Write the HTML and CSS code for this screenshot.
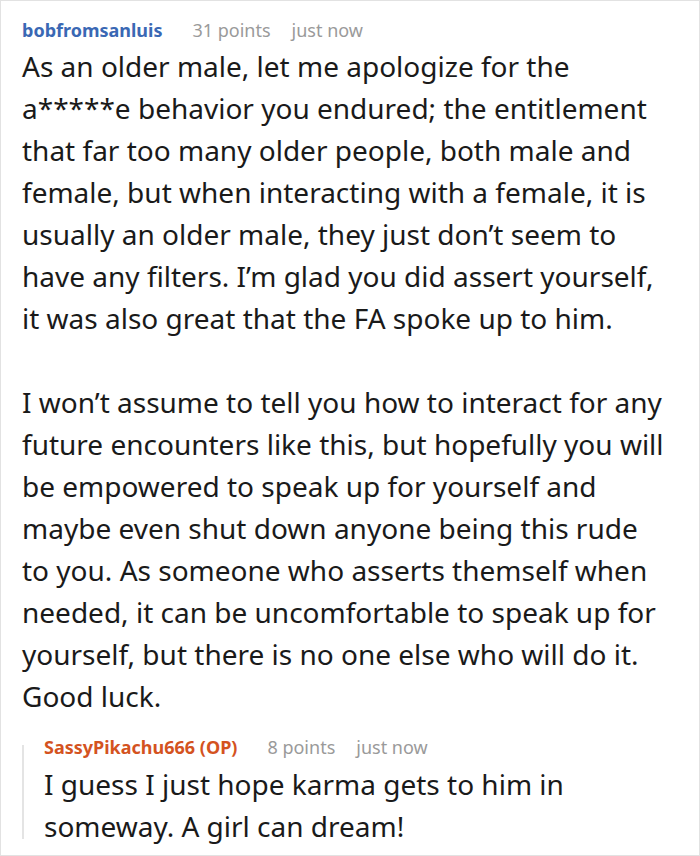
FILE: index.html
```html
<!DOCTYPE html>
<html lang="en">
<head>
<meta charset="utf-8">
<link rel="stylesheet" href="styles.css">
</head>
<body>
<div class="card">
  <div class="meta">
    <span class="user">bobfromsanluis</span>
    <span class="points">31 points</span>
    <span class="time">just now</span>
  </div>
  <div class="text">
    <p>As an older male, let me apologize for the a*****e behavior you endured; the entitlement that far too many older people, both male and female, but when interacting with a female, it is usually an older male, they just don’t seem to have any filters. I’m glad you did assert yourself, it was also great that the FA spoke up to him.</p>
    <p>I won’t assume to tell you how to interact for any future encounters like this, but hopefully you will be empowered to speak up for yourself and maybe even shut down anyone being this rude to you. As someone who asserts themself when needed, it can be uncomfortable to speak up for yourself, but there is no one else who will do it. Good luck.</p>
  </div>
  <div class="reply">
    <div class="meta reply-meta">
      <span class="user op">SassyPikachu666 (OP)</span>
      <span class="points">8 points</span>
      <span class="time">just now</span>
    </div>
    <div class="text">
      <p>I guess I just hope karma gets to him in someway. A girl can dream!</p>
    </div>
  </div>
</div>
</body>
</html>
```
FILE: styles.css
```css
html, body {
  margin: 0;
  padding: 0;
  background: #fff;
}
.card {
  width: 700px;
  height: 856px;
  box-sizing: border-box;
  border: 1px solid #e2e2e2;
  padding: 15px 29px 0 21px;
  font-family: "Noto Sans", "Open Sans", sans-serif;
  color: #1a1a1a;
  overflow: hidden;
}
.meta {
  display: flex;
  align-items: baseline;
  font-size: 18px;
  line-height: 29px;
  white-space: nowrap;
}
.user {
  font-weight: 700;
  color: #3a68b4;
  margin-right: 30px;
}
.user.op {
  color: #d4531f;
}
.points {
  color: #9a9a9a;
  margin-right: 21px;
}
.time {
  color: #9a9a9a;
}
.text {
  font-size: 28px;
  line-height: 42px;
}
.text p {
  margin: 0 0 42px 0;
}
.text p:last-child {
  margin-bottom: 0;
}
.reply {
  position: relative;
  margin-top: 14px;
  padding-left: 22px;
}
.reply::before {
  content: "";
  position: absolute;
  left: 0;
  top: 14px;
  bottom: 8px;
  width: 2px;
  background: #e4e4e4;
}
.reply-meta {
  line-height: 32px;
}
```
